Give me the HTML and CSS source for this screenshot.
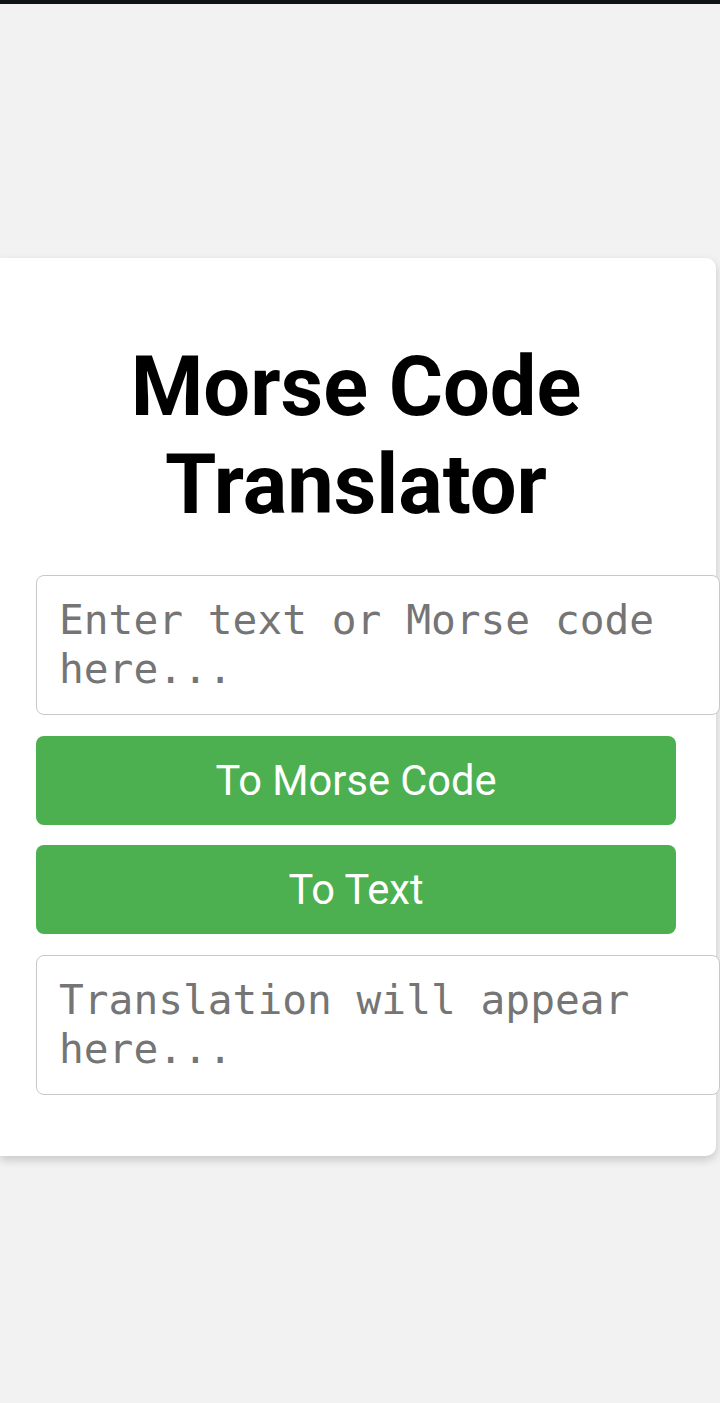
FILE: index.html
```html
<!DOCTYPE html>
<html lang="en">
<head>
<meta charset="utf-8">
<title>Morse Code Translator</title>
<link rel="stylesheet" href="styles.css">
</head>
<body>
<div class="topbar"></div>
<main class="card">
  <h1 class="title">Morse Code Translator</h1>
  <textarea class="field" rows="2" placeholder="Enter text or Morse code here..."></textarea>
  <button class="btn" type="button">To Morse Code</button>
  <button class="btn" type="button">To Text</button>
  <textarea class="field field-out" rows="2" readonly placeholder="Translation will appear here..."></textarea>
</main>
</body>
</html>
```

FILE: styles.css
```css
html, body {
  margin: 0;
  padding: 0;
}
body {
  background: #f2f2f2;
  font-family: Roboto, "Noto Sans", sans-serif;
  height: 1403px;
  overflow: hidden;
}
.topbar {
  height: 4px;
  background: #0e1517;
}
.card {
  margin-top: 254px;
  width: 716px;
  box-sizing: border-box;
  padding: 40px 0 40px 36px;
  background: #fff;
  border-radius: 0 10px 10px 0;
  box-shadow: 0 4px 10px rgba(0, 0, 0, 0.18);
  display: flex;
  flex-direction: column;
  align-items: flex-start;
}
.title {
  margin: 40px 0 41px;
  width: 640px;
  text-align: center;
  font-size: 83px;
  line-height: 98px;
  font-weight: 700;
  color: #000;
}
.field {
  display: block;
  width: 640px;
  height: 98px;
  padding: 20px 20px 20px 22px;
  margin: 0;
  border: 1px solid #c8c8c8;
  border-radius: 8px;
  font-family: "DejaVu Sans Mono", monospace;
  font-size: 41.2px;
  line-height: 49px;
  color: #000;
  background: #fff;
  resize: none;
  overflow: hidden;
  outline: none;
}
.field::placeholder {
  color: #757575;
}
.field-out {
  margin-bottom: 21px;
}
.btn {
  display: block;
  width: 640px;
  height: 89px;
  margin: 21px 0 0;
  padding: 0;
  border: none;
  border-radius: 8px;
  background: #4caf50;
  color: #fff;
  font-family: Roboto, "Noto Sans", sans-serif;
  font-size: 41.6px;
  cursor: pointer;
}
.btn + .btn {
  margin-top: 20px;
}
.btn + .field {
  margin-top: 21px;
}
```
